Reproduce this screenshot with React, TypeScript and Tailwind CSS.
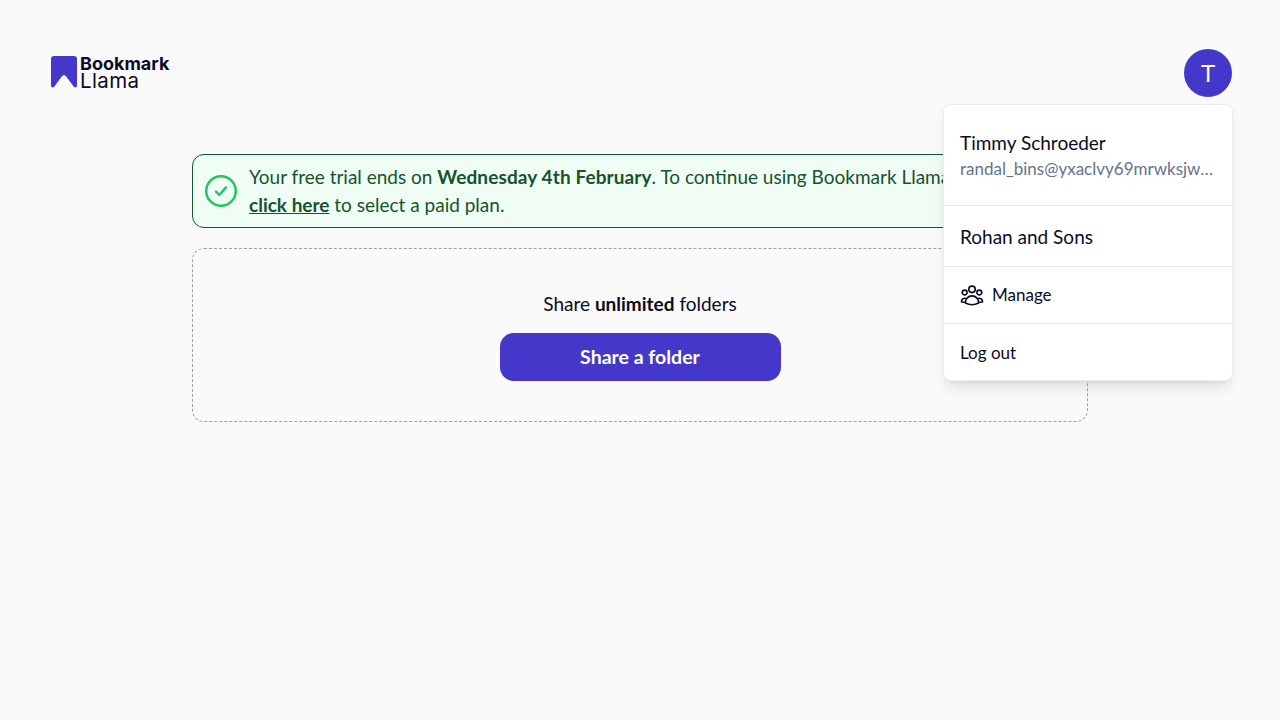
import React from 'react';
import { HiOutlineUserGroup } from 'react-icons/hi2';

const Logo = () => (
  <div className="flex items-center gap-[3px] ml-[3px] -mt-[2px]">
    <svg width="26" height="32" viewBox="0 0 26 32" className="shrink-0">
      <path
        d="M3 0H23a3 3 0 0 1 3 3V29.5a1.8 1.8 0 0 1-3.2 1.2L15 20.2a2.5 2.5 0 0 0-4 0L3.2 30.7A1.8 1.8 0 0 1 0 29.5V3a3 3 0 0 1 3-3Z"
        fill="#4537c9"
      />
    </svg>
    <div className="flex flex-col font-['Inter',sans-serif] text-[#0b0b25]">
      <span className="text-[18px] leading-[17px] font-bold">Bookmark</span>
      <span className="text-[20.5px] leading-[17px] font-normal tracking-[0.4px]">Llama</span>
    </div>
  </div>
);

const CheckIcon = () => (
  <svg width="32" height="32" viewBox="0 0 32 32" fill="none" className="shrink-0">
    <circle cx="16" cy="16" r="14.8" stroke="#22c55e" strokeWidth="2.5" />
    <path d="M11 16.6l3.4 3.4 6.6-7.6" stroke="#22c55e" strokeWidth="2.4" strokeLinecap="round" strokeLinejoin="round" />
  </svg>
);

const UserMenu = () => (
  <div className="absolute top-[104px] right-[47px] w-[290px] bg-white rounded-lg border border-[#ececee] shadow-lg text-[#0b0b25] z-10">
    <div className="px-4 py-6 border-b border-[#e5e7eb]">
      <div className="text-[19px] leading-7">Timmy Schroeder</div>
      <div className="text-[17px] leading-6 text-[#64748b] truncate">randal_bins@yxaclvy69mrwksjwqp.example.com</div>
    </div>
    <div className="px-4 pt-[17px] pb-[15px] border-b border-[#e5e7eb] text-[19px] leading-7">Rohan and Sons</div>
    <div className="flex items-center gap-[7px] pl-[15px] pr-4 py-4 border-b border-[#e5e7eb] text-[17px] leading-6">
      <HiOutlineUserGroup className="w-[26px] h-[26px] -my-px" />
      <span>Manage</span>
    </div>
    <div className="px-4 pt-[17px] pb-[15px] text-[17px] leading-6">Log out</div>
  </div>
);

export default function App() {
  return (
    <div className="relative min-h-[720px] bg-[#fafafa] font-['Lato',sans-serif] text-[#0b0b25]">
      <header className="flex items-center justify-between px-12 pt-[49px]">
        <Logo />
        <div className="flex items-center justify-center w-12 h-12 rounded-full bg-[#4537c9] text-white text-2xl">T</div>
      </header>
      <UserMenu />
      <main className="w-[896px] mx-auto mt-[57px] flex flex-col gap-5">
        <div className="flex items-center gap-3 px-3 py-[8px] rounded-xl border border-[#14532d] bg-[#f0fdf4] text-[#14532d] text-[19px] leading-7">
          <CheckIcon />
          <p>
            Your free trial ends on <b className="tracking-[0.1px]">Wednesday 4th February</b>. To continue using Bookmark Llama, please
            <br />
            <a className="font-bold underline">click here</a> to select a paid plan.
          </p>
        </div>
        <div className="flex flex-col items-center pt-[41px] pb-[40px] rounded-xl border border-dashed border-[#94a3b8]">
          <p className="text-[19px] leading-7">
            Share <b>unlimited</b> folders
          </p>
          <button className="mt-[15px] w-[281px] h-12 rounded-[14px] bg-[#4537c9] text-white text-[19.5px] font-bold">
            Share a folder
          </button>
        </div>
      </main>
    </div>
  );
}
